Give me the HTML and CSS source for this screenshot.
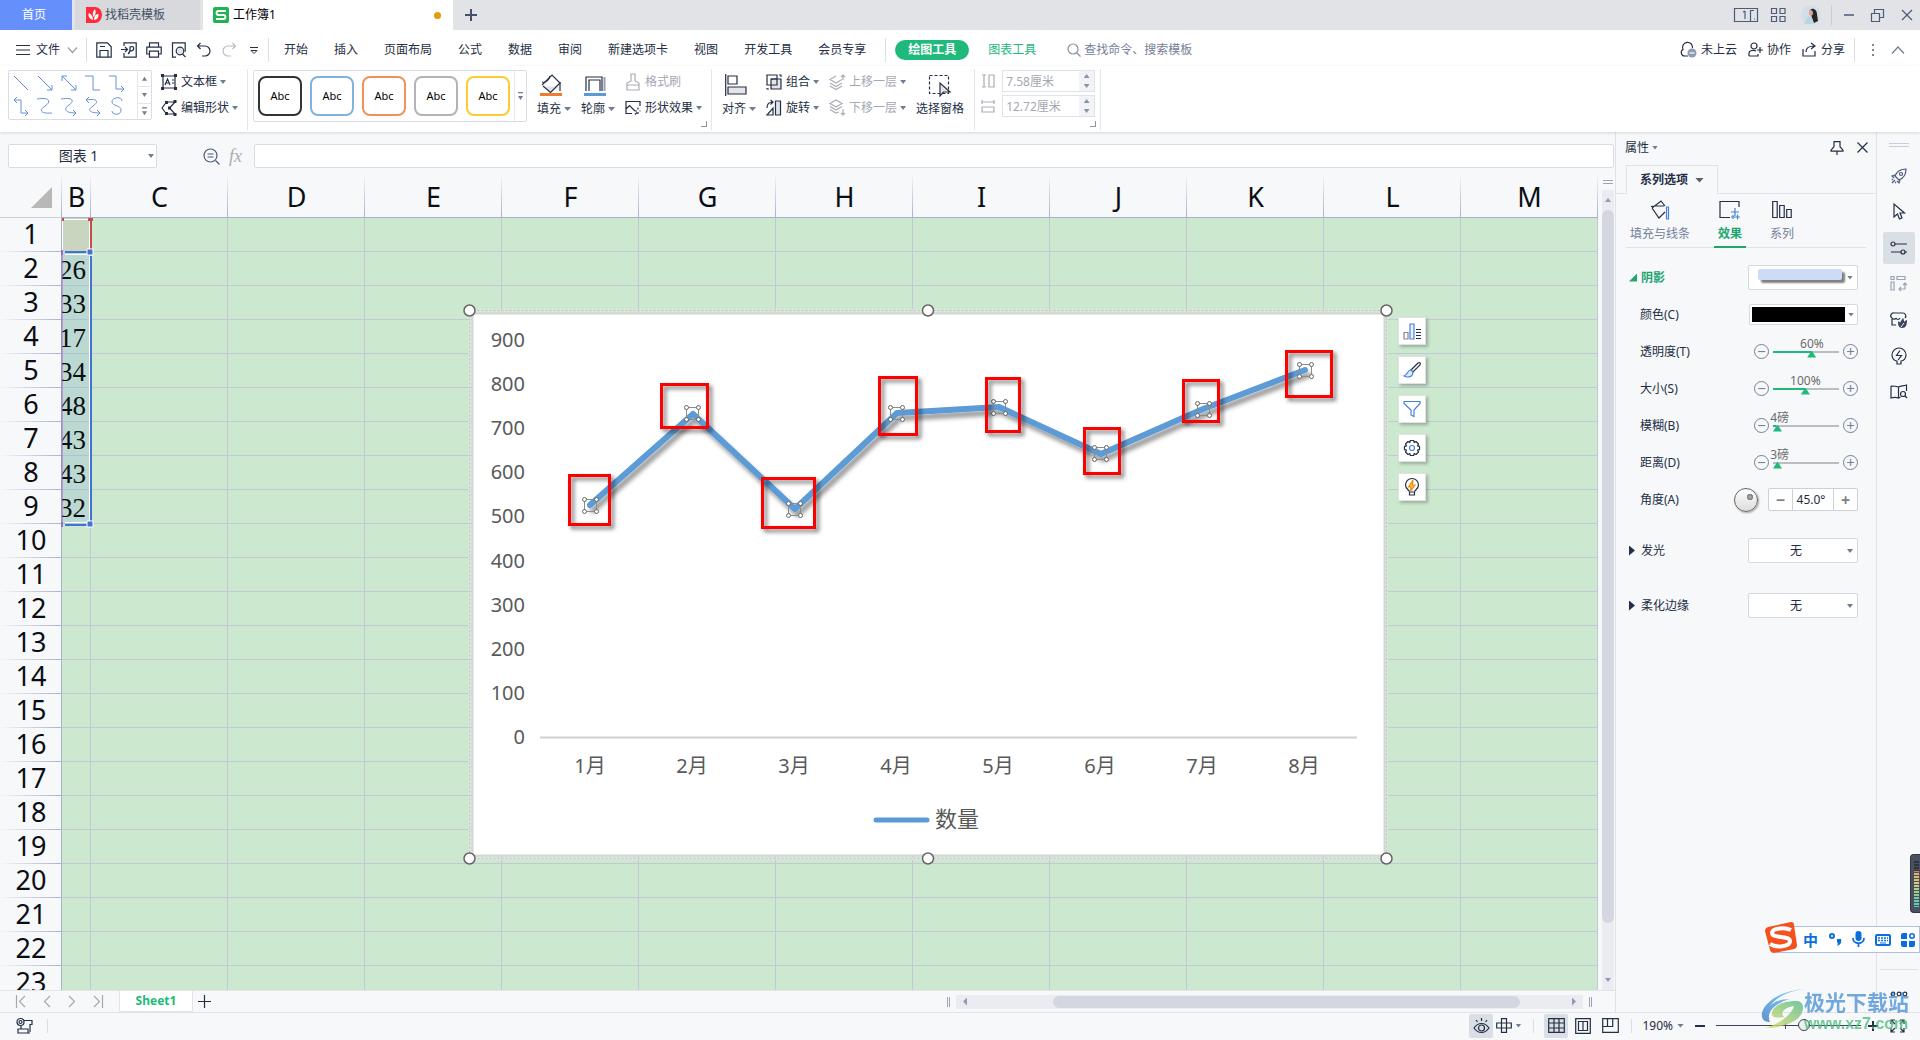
FILE: index.html
```html
<!DOCTYPE html>
<html lang="zh-CN">
<head>
<meta charset="utf-8">
<title>工作簿1</title>
<link rel="stylesheet" href="styles.css">
</head>
<body>
<header class="titlebar">
  <button class="tab tab-home">首页</button>
  <button class="tab tab-store">
    <svg width="16" height="16" viewBox="0 0 16 16"><path d="M0 0h9a7 8 0 0 1 0 16H0z" fill="#ff2b3c"/><path d="M7 13C2 11 2 8 3 6c2 1 4 3 4 7zM7.500 10C6 7 7 4 9 2c1 3 1 6-1.500 8zM8 13c0-4 2-6 4.500-6C13 10 11 13 8 13z" fill="#fff"/></svg>
    找稻壳模板</button>
  <button class="tab tab-active">
    <svg width="16" height="16" viewBox="0 0 16 16"><rect width="16" height="16" rx="2" fill="#1eb450"/><path d="M13 4H5.500C3 4 3 8 5.500 8h5C13 8 13 12 10.500 12H3" fill="none" stroke="#fff" stroke-width="2"/></svg>
    工作簿1<i class="unsaved"></i></button>
  <button class="icon-btn new-tab" aria-label="新建"><svg class="ln" width="12" height="12"><path d="M6 0v12M0 6h12" stroke="#45506a" stroke-width="2"/></svg></button>
  <div class="window-tools">
    <button class="icon-btn" aria-label="窗口"><svg class="ln slate" width="24" height="14"><path d="M.5.5h23v13H.5zM11 3v8M9 4l2-1M20 2.500h-3.500v11M20 11h1"/></svg></button>
    <button class="icon-btn apps" aria-label="应用"><svg class="ln slate" width="15" height="14"><path d="M.5.5h5v5h-5zM9 .5h5v5H9zM.5 8.500h5v5h-5zM9 8.500h5v5H9z"/></svg></button>
    <svg class="avatar" width="20" height="20" viewBox="0 0 20 20"><circle cx="10" cy="10" r="10" fill="#d3dfe6"/><path d="M9 5c3-3 7 0 7 4l1 7-4 2-2-5z" fill="#2b2226"/><path d="M8 5c2-1 4 1 4 3 0 3-2 3-4 2z" fill="#d9a596"/><path d="M3 19l4-8 4 2 2 6z" fill="#b9d7e2"/></svg>
    <i class="sep"></i>
    <button class="icon-btn min" aria-label="最小化"><svg class="ln slate" width="12" height="12"><path d="M1 6h10" stroke-width="1.500"/></svg></button>
    <button class="icon-btn restore" aria-label="还原"><svg class="ln slate" width="13" height="13"><path d="M.5 4.500h8v8h-8zM3.500 4V.5h9v8H9"/></svg></button>
    <button class="icon-btn" aria-label="关闭"><svg class="ln slate" width="12" height="12"><path d="M1 1l10 10M11 1L1 11"/></svg></button>
  </div>
</header>

<nav class="menubar">
  <button class="file-menu"><svg class="ln" width="14" height="12"><path d="M0 1.500h14M0 6h14M0 10.500h14"/></svg>文件
    <svg class="ln chev" width="9" height="6"><path d="M0 .5l4.500 5 4.500-5"/></svg></button>
  <i class="vr"></i>
  <div class="quick">
    <button class="icon-btn" aria-label="保存"><svg class="ln" width="16" height="16"><path d="M.8.8h10.700l3.700 4v10.400H.8zM4 4.500h5M4 15V8.500h8V15" /></svg></button>
    <button class="icon-btn" aria-label="输出为PDF"><svg class="ln" width="16" height="16"><path d="M3 4V.8h12.200v14.400H3V11M0 7.500h6M4 5l2.500 2.500L4 10M7 12c3-2 2-5 2-7 5-2 5 4 0 4"/></svg></button>
    <button class="icon-btn" aria-label="打印"><svg class="ln" width="16" height="16"><path d="M3.500 5V.8h9V5M3.500 12H.8V5.200h14.400V12h-2.700M3.500 9.200h9v6h-9z"/></svg></button>
    <button class="icon-btn" aria-label="打印预览"><svg class="ln" width="16" height="16"><path d="M5 15.200H1.500V.8h12.700v9"/><circle cx="9" cy="9" r="3.800" fill="#e3e5e8"/><path d="M11.500 12l3 3.200"/></svg></button>
    <button class="icon-btn" aria-label="撤销"><svg class="ln" width="16" height="16"><path d="M4.500 1L1.500 4l3 3M1.500 4h7.500a5 5 0 0 1 0 10H6"/></svg></button>
    <button class="icon-btn" aria-label="恢复"><svg class="ln pale" width="16" height="16"><path d="M11.500 1l3 3-3 3M14.500 4H7a5 5 0 0 0 0 10h3"/></svg></button>
    <button class="icon-btn" aria-label="更多"><svg class="ln" width="16" height="16"><path d="M4 5.500h8M5 8.500h6l-3 3z" stroke-width="1"/></svg></button>
  </div>
  <i class="vr"></i>
  <div class="menus">
    <button>开始</button><button>插入</button><button>页面布局</button><button>公式</button><button>数据</button><button>审阅</button><button>新建选项卡</button><button>视图</button><button>开发工具</button><button>会员专享</button>
  </div>
  <i class="vr"></i>
  <button class="pill">绘图工具</button>
  <button class="green-tab">图表工具</button>
  <label class="search"><svg class="ln" width="14" height="14"><circle cx="6" cy="6" r="5"/><path d="M9.500 9.500l4 4"/></svg><input type="text" placeholder="查找命令、搜索模板"></label>
  <div class="account">
    <button><svg class="ln" width="17" height="16"><path d="M8 14H4.500A3.500 3.500 0 0 1 3 7.500 5 5 0 1 1 12.500 6"/><circle cx="12" cy="11" r="4.500" fill="#8f9ab3" stroke="none"/><path d="M9.500 11h5" stroke="#fff"/></svg>未上云</button>
    <button><svg class="ln" width="15" height="15"><circle cx="6" cy="4" r="3"/><path d="M1 14v-3c0-3 5-3 7-2M1 14h9v-2M12 5v6M9 8h6"/></svg>协作</button>
    <button><svg class="ln" width="15" height="15"><path d="M1 7v7h12V9M4 10c0-4 3-6 8-6M9 1l4 3-4 3"/></svg>分享</button>
    <i class="vr"></i>
    <button class="icon-btn" aria-label="更多"><svg width="4" height="14"><path d="M1 1h2v2H1zM1 6h2v2H1zM1 11h2v2H1z" fill="#7c8599"/></svg></button>
    <button class="icon-btn" aria-label="收起"><svg class="ln" width="14" height="8"><path d="M1 7.500L7 1l6 6.500" stroke="#707a90"/></svg></button>
  </div>
</nav>

<section class="ribbon">
  <div class="group g-shapes">
    <div class="shape-gallery">
      <div class="shapes">
        <button aria-label="直线"><svg width="24" height="24"><path d="M5 5l14 14"/></svg></button>
        <button aria-label="箭头"><svg width="24" height="24"><path d="M5 5l14 14M19 14v5h-5"/></svg></button>
        <button aria-label="双箭头"><svg width="24" height="24"><path d="M5 5l14 14M19 14v5h-5M5 10V5h5"/></svg></button>
        <button aria-label="肘形"><svg width="24" height="24"><path d="M4 5h8v14h7"/></svg></button>
        <button aria-label="肘形箭头"><svg width="24" height="24"><path d="M4 5h7v13h8M16 15l3 3-3 3"/></svg></button>
        <button aria-label="肘形双箭头"><svg width="24" height="24"><path d="M5 5h7v13h7M16 15l3 3-3 3M8 2L5 5l3 3"/></svg></button>
        <button aria-label="曲线"><svg width="24" height="24"><path d="M4 4c14-2 14 3 8 7s-5 8 7 7"/></svg></button>
        <button aria-label="曲线箭头"><svg width="24" height="24"><path d="M4 4c12-2 14 2 8 6s-4 8 7 8M16 15l3 3-3 3"/></svg></button>
        <button aria-label="曲线双箭头"><svg width="24" height="24"><path d="M5 5c12-2 13 2 7 6s-4 7 7 7M16 15l3 3-3 3M8 2L5 5l3 3"/></svg></button>
        <button aria-label="自由曲线"><svg width="24" height="24"><path d="M17 6c0-5-10-4-10 1 0 4 9 3 9 8 0 6-9 5-9 1"/></svg></button>
      </div>
      <div class="gallery-nav"><button aria-label="上"><i class="caret up"></i></button><button aria-label="下"><i class="caret"></i></button><button aria-label="展开"><i class="caret bar"></i></button></div>
    </div>
    <div class="pair">
      <button class="cmd"><svg class="ln" width="16" height="16"><path d="M2 2h12v12H2z"/><path d="M0 0h3v3H0zM13 0h3v3h-3zM0 13h3v3H0zM13 13h3v3h-3z" fill="#242e44" stroke="none"/><path d="M4 11l2.500-6L9 11M5 9h3M11 6h2M11 9h2"/></svg>文本框<i class="caret"></i></button>
      <button class="cmd"><svg class="ln" width="16" height="16"><path d="M5.500 2H14L8.500 8l5.500 6H5.500L1 8z"/><path d="M4 1h3v3H4zM12.500 0h3v3h-3zM12.500 13h3v3h-3zM4 12h3v3H4zM7 6.500h3v3H7z" fill="#242e44" stroke="none"/></svg>编辑形状<i class="caret"></i></button>
    </div>
  </div>
  <div class="group g-style">
    <div class="style-gallery">
      <button class="swatch s-black">Abc</button><button class="swatch s-blue">Abc</button><button class="swatch s-orange">Abc</button><button class="swatch s-gray">Abc</button><button class="swatch s-gold">Abc</button>
      <button class="more" aria-label="展开"><i class="caret bar"></i></button>
    </div>
    <button class="big"><svg class="ln" width="22" height="22" viewBox="0 0 22 22"><path d="M5 12.500h14L10.500 19z" fill="#dfe2e6" stroke="none"/><path d="M2 11L12 1l8 8-9.500 9.500L3 12"/><path d="M2 8c4 1 7-2 8-6M20 8v9"/><path d="M0 20.500h22" stroke="#ed7d31" stroke-width="3"/></svg><span>填充<i class="caret"></i></span></button>
    <button class="big"><svg class="ln" width="22" height="22" viewBox="0 0 22 22"><path d="M2 17V3h16v14"/><path d="M5 17V6h11v11" /><path d="M20.500 3v14" stroke="#9aa0ac" stroke-width="2"/><path d="M0 20.500h22" stroke="#5b9bd5" stroke-width="3"/></svg><span>轮廓<i class="caret"></i></span></button>
    <div class="pair">
      <button class="cmd off"><svg class="ln" width="16" height="18"><path d="M6 8V1h4v7l4 2v7H2v-7zM2 12h12"/></svg>格式刷</button>
      <button class="cmd"><svg class="ln" width="16" height="16"><path d="M15 6V1.500H1v12h6M1 9l3.500-3.500L10 11M13 7.500v2M13 12v2M10 11h2M14.500 11h1M10 14.500l2-2"/></svg>形状效果<i class="caret"></i></button>
    </div>
    <i class="corner"></i>
  </div>
  <div class="group g-arrange">
    <button class="big"><svg class="ln" width="22" height="22"><path d="M.7 0v22M3 2h9v8H3z"/><path d="M3 13h18v7H3z" fill="#e3e5e8"/></svg><span>对齐<i class="caret"></i></span></button>
    <div class="pair">
      <button class="cmd"><svg class="ln" width="16" height="16"><path d="M5 5h10v10H5z" fill="#e3e5e8"/><path d="M1 1h10v10H1zM5 5h6v6M1 14v1h2M13 1h2v2"/></svg>组合<i class="caret"></i></button>
      <button class="cmd"><svg class="ln" width="16" height="16"><path d="M9.500 1h5v14h-5z" fill="#e3e5e8"/><path d="M7 15H1l6-7zM1 8c0-4 2-6 6-6M4.500 0L7 2 4.500 4.500"/></svg>旋转<i class="caret"></i></button>
    </div>
    <div class="pair">
      <button class="cmd off"><svg class="ln" width="16" height="16"><path d="M7 2L1 5.500 7 9l6-3.500M1 9l6 3.500L13 9M1 12l6 3.500 6-3.500M14 6V1M12 3l2-2 2 2"/></svg>上移一层<i class="caret"></i></button>
      <button class="cmd off"><svg class="ln" width="16" height="16"><path d="M7 0L1 3.500 7 7l6-3.500zM1 6.500L7 10l6-3.500M1 9.500L7 13l3-1M14 9v6M12 13l2 2 2-2"/></svg>下移一层<i class="caret"></i></button>
    </div>
    <button class="big pane"><svg class="ln" width="24" height="22"><path d="M1.500 1.500h19v18h-19z" stroke-dasharray="3 2"/><path d="M12 9v13l3.500-4H22z" fill="#e3e5e8"/></svg><span>选择窗格</span></button>
  </div>
  <div class="group g-size">
    <div class="pair">
      <label class="dim"><svg class="ln" width="14" height="14"><path d="M1 1h4M1 13h4M3 1v12M8 1h5v12H8z"/></svg><input type="text" value="7.58厘米" aria-label="高度" disabled><span class="steps"><i class="caret up"></i><i class="caret"></i></span></label>
      <label class="dim"><svg class="ln" width="14" height="14"><path d="M1 1v4M13 1v4M1 3h12M1 8h12v5H1z"/></svg><input type="text" value="12.72厘米" aria-label="宽度" disabled><span class="steps"><i class="caret up"></i><i class="caret"></i></span></label>
    </div>
    <i class="corner"></i>
  </div>
</section>

<main class="workspace">
  <section class="book">
    <div class="formula-bar">
      <div class="name-box"><input type="text" value="图表 1" aria-label="名称框"><i class="caret"></i></div>
      <button class="icon-btn lens" aria-label="浏览公式"><svg class="ln slate" width="17" height="17"><circle cx="7.500" cy="7.500" r="6.500"/><path d="M12.500 12.500l4 4M4.500 6h6M4.500 9h6"/></svg></button>
      <span class="fx">fx</span>
      <input class="formula" type="text" aria-label="编辑栏">
    </div>
    <div class="sheet-area">
      <div class="sheet">
        <table class="cells">
          <colgroup><col class="c-head"><col class="c-b"><col span="11" class="c-std"></colgroup>
          <thead><tr><th class="all"><i></i></th><th>B</th><th>C</th><th>D</th><th>E</th><th>F</th><th>G</th><th>H</th><th>I</th><th>J</th><th>K</th><th>L</th><th>M</th></tr></thead>
          <tbody>
            <tr><th>1</th><td class="ref-name"></td><td></td><td></td><td></td><td></td><td></td><td></td><td></td><td></td><td></td><td></td><td></td></tr>
            <tr><th>2</th><td class="ref-val"><div>26</div></td><td></td><td></td><td></td><td></td><td></td><td></td><td></td><td></td><td></td><td></td><td></td></tr>
            <tr><th>3</th><td class="ref-val"><div>33</div></td><td></td><td></td><td></td><td></td><td></td><td></td><td></td><td></td><td></td><td></td><td></td></tr>
            <tr><th>4</th><td class="ref-val"><div>17</div></td><td></td><td></td><td></td><td></td><td></td><td></td><td></td><td></td><td></td><td></td><td></td></tr>
            <tr><th>5</th><td class="ref-val"><div>34</div></td><td></td><td></td><td></td><td></td><td></td><td></td><td></td><td></td><td></td><td></td><td></td></tr>
            <tr><th>6</th><td class="ref-val"><div>48</div></td><td></td><td></td><td></td><td></td><td></td><td></td><td></td><td></td><td></td><td></td><td></td></tr>
            <tr><th>7</th><td class="ref-val"><div>43</div></td><td></td><td></td><td></td><td></td><td></td><td></td><td></td><td></td><td></td><td></td><td></td></tr>
            <tr><th>8</th><td class="ref-val"><div>43</div></td><td></td><td></td><td></td><td></td><td></td><td></td><td></td><td></td><td></td><td></td><td></td></tr>
            <tr><th>9</th><td class="ref-val"><div>32</div></td><td></td><td></td><td></td><td></td><td></td><td></td><td></td><td></td><td></td><td></td><td></td></tr>
            <tr><th>10</th><td></td><td></td><td></td><td></td><td></td><td></td><td></td><td></td><td></td><td></td><td></td><td></td></tr>
            <tr><th>11</th><td></td><td></td><td></td><td></td><td></td><td></td><td></td><td></td><td></td><td></td><td></td><td></td></tr>
            <tr><th>12</th><td></td><td></td><td></td><td></td><td></td><td></td><td></td><td></td><td></td><td></td><td></td><td></td></tr>
            <tr><th>13</th><td></td><td></td><td></td><td></td><td></td><td></td><td></td><td></td><td></td><td></td><td></td><td></td></tr>
            <tr><th>14</th><td></td><td></td><td></td><td></td><td></td><td></td><td></td><td></td><td></td><td></td><td></td><td></td></tr>
            <tr><th>15</th><td></td><td></td><td></td><td></td><td></td><td></td><td></td><td></td><td></td><td></td><td></td><td></td></tr>
            <tr><th>16</th><td></td><td></td><td></td><td></td><td></td><td></td><td></td><td></td><td></td><td></td><td></td><td></td></tr>
            <tr><th>17</th><td></td><td></td><td></td><td></td><td></td><td></td><td></td><td></td><td></td><td></td><td></td><td></td></tr>
            <tr><th>18</th><td></td><td></td><td></td><td></td><td></td><td></td><td></td><td></td><td></td><td></td><td></td><td></td></tr>
            <tr><th>19</th><td></td><td></td><td></td><td></td><td></td><td></td><td></td><td></td><td></td><td></td><td></td><td></td></tr>
            <tr><th>20</th><td></td><td></td><td></td><td></td><td></td><td></td><td></td><td></td><td></td><td></td><td></td><td></td></tr>
            <tr><th>21</th><td></td><td></td><td></td><td></td><td></td><td></td><td></td><td></td><td></td><td></td><td></td><td></td></tr>
            <tr><th>22</th><td></td><td></td><td></td><td></td><td></td><td></td><td></td><td></td><td></td><td></td><td></td><td></td></tr>
            <tr><th>23</th><td></td><td></td><td></td><td></td><td></td><td></td><td></td><td></td><td></td><td></td><td></td><td></td></tr>
          </tbody>
        </table>
        <!-- source ranges of the series -->
        <svg class="ranges" width="34" height="314" viewBox="0 0 34 314">
          <path d="M1.500 1v32M1 1.500h27" stroke="#fff"/><path d="M28.500 3v30" stroke="#fff"/><path d="M30 2v32" stroke="#c84c4c" stroke-width="2"/><path d="M1 0h2v3H1zM27 0h5v3h-5z" fill="#c84c4c"/>
          <path d="M4 36.500h23M28.500 39v266M4 304.500h23" stroke="#fff"/>
          <path d="M4 34h25M30 38v268M4 307h24" stroke="#4472d4" stroke-width="2"/><path d="M1 34v273" stroke="#9a6bc8" stroke-width="1"/>
          <path d="M26 31h6v6h-6zM26 303h6v6h-6z" fill="#4472d4" stroke="#fff"/><path d="M0 32h2v5H0zM0 304h2v5H0z" fill="#9a6bc8"/>
        </svg>
        <svg class="chart" width="936" height="570" viewBox="460 300 936 570">
          <defs>
            <filter id="lineShadow" x="-10%" y="-30%" width="120%" height="170%"><feDropShadow dx="3" dy="5" stdDeviation="2" flood-color="#000" flood-opacity=".4"/></filter>
            <filter id="boxShadow" x="-30%" y="-30%" width="170%" height="170%"><feDropShadow dx="3" dy="3" stdDeviation="2" flood-color="#000" flood-opacity=".55"/></filter>
            <g id="mark"><path d="M-6-6H6V6H-6z" fill="none" stroke="#8c8c8c"/><g fill="#fff" stroke="#666"><circle cx="-6" cy="-6" r="2"/><circle cx="6" cy="-6" r="2"/><circle cx="-6" cy="6" r="2"/><circle cx="6" cy="6" r="2"/></g></g>
          </defs>
          <rect x="469.500" y="310.500" width="917" height="548" fill="none" stroke="#e3e6e4" stroke-width="2"/>
          <rect x="469.500" y="310.500" width="917" height="548" fill="none" stroke="#b9c4bd" stroke-dasharray="2 2"/>
          <rect x="472.500" y="313.500" width="912" height="542" fill="#fff" stroke="#d4d6d5" stroke-width="2"/>
          <g class="axis" text-anchor="end"><text x="525" y="347">900</text><text x="525" y="391">800</text><text x="525" y="435">700</text><text x="525" y="479">600</text><text x="525" y="523">500</text><text x="525" y="568">400</text><text x="525" y="612">300</text><text x="525" y="656">200</text><text x="525" y="700">100</text><text x="525" y="744">0</text></g>
          <path d="M540 737.500h817" stroke="#d0d0d0" stroke-width="2"/>
          <g class="axis" text-anchor="middle"><text x="590" y="773">1月</text><text x="692" y="773">2月</text><text x="794" y="773">3月</text><text x="896" y="773">4月</text><text x="998" y="773">5月</text><text x="1100" y="773">6月</text><text x="1202" y="773">7月</text><text x="1304" y="773">8月</text></g>
          <polyline points="590,505 693,414 795,509 897,413 999,407 1101,454 1203,409 1305,370" fill="none" stroke="#5b9bd5" stroke-width="6" stroke-linecap="round" stroke-linejoin="round" filter="url(#lineShadow)"/>
          <use href="#mark" x="590.500" y="505.500"/><use href="#mark" x="692.500" y="413.500"/><use href="#mark" x="794.500" y="509.500"/><use href="#mark" x="896.500" y="413.500"/><use href="#mark" x="999.500" y="407.500"/><use href="#mark" x="1100.500" y="453.500"/><use href="#mark" x="1203.500" y="409.500"/><use href="#mark" x="1305.500" y="370.500"/>
          <path d="M876 820h51" stroke="#5b9bd5" stroke-width="5" stroke-linecap="round"/><text class="legend" x="935" y="827">数量</text>
          <g fill="none" stroke="#f00" stroke-width="3">
            <rect x="569.500" y="475.500" width="40" height="49" filter="url(#boxShadow)"/><rect x="661.500" y="384.500" width="46" height="43" filter="url(#boxShadow)"/><rect x="762.500" y="478.500" width="52" height="49" filter="url(#boxShadow)"/><rect x="879.500" y="377.500" width="37" height="57" filter="url(#boxShadow)"/><rect x="986.500" y="378.500" width="33" height="53" filter="url(#boxShadow)"/><rect x="1084.500" y="428.500" width="35" height="45" filter="url(#boxShadow)"/><rect x="1183.500" y="380.500" width="35" height="41" filter="url(#boxShadow)"/><rect x="1286.500" y="351.500" width="45" height="45" filter="url(#boxShadow)"/>
          </g>
          <g fill="#fff" stroke="#666" stroke-width="1.500"><circle cx="469.500" cy="310.500" r="5.500"/><circle cx="928" cy="310.500" r="5.500"/><circle cx="1386.500" cy="310.500" r="5.500"/><circle cx="469.500" cy="858.500" r="5.500"/><circle cx="928" cy="858.500" r="5.500"/><circle cx="1386.500" cy="858.500" r="5.500"/></g>
        </svg>
        <div class="chart-tools">
          <button aria-label="图表元素"><svg class="ln" width="18" height="18"><path d="M1 10.500h4V17H1z" stroke="#888"/><path d="M7 2h4v15H7z" stroke="#4a80dc" fill="#eaf1fd"/><path d="M13 7.500h5M13 10.500h5M13 13.500h5M13 16.500h5"/></svg></button>
          <button aria-label="图表样式"><svg class="ln" width="18" height="18"><path d="M8 9l7-7c2-1 3 0 2 2l-7 7z"/><path d="M8 9c-4 0-3 5-7 6 4 2 9 1 9-4z" stroke="#4a80dc" fill="#dbe8fc"/></svg></button>
          <button aria-label="图表筛选器"><svg class="ln" width="18" height="18"><path d="M1 1.500h16v2L11 10v6.500L8 15v-5L1 3.500z" stroke="#4a80dc"/></svg></button>
          <button aria-label="设置"><svg class="ln" width="18" height="18" viewBox="0 0 18 18"><path d="M7.300 1.500h3.400l.5 2 1.800-1 2.500 2.500-1 1.800 2 .5v3.400l-2 .5 1 1.800-2.500 2.500-1.800-1-.5 2H7.300l-.5-2-1.800 1L2.500 13l1-1.800-2-.5V7.300l2-.5-1-1.800L5 2.500l1.800 1z" stroke-linejoin="round"/><circle cx="9" cy="9" r="2.500" stroke="#4a80dc"/></svg></button>
          <button aria-label="智能"><svg class="ln" width="18" height="18"><path d="M6.500 14c0-2-4-3-4-7a6.500 6.500 0 0 1 13 0c0 4-4 5-4 7zM6.500 17h5V14h-5z"/><path d="M10 2L5.500 9H8l-.5 4L12 7H9.500z" fill="#ffc629" stroke="#e88b1a"/></svg></button>
        </div>
      </div>
      <div class="vscroll"><i class="split-h"></i><div class="vtrack"><i class="caret up"></i><i class="vthumb"></i><i class="caret"></i></div></div>
    </div>
    <div class="sheet-tabs">
      <div class="sheet-nav">
        <button class="icon-btn" aria-label="第一张"><svg class="ln" width="10" height="13"><path d="M.5 0v13M9 1L3.500 6.500 9 12"/></svg></button>
        <button class="icon-btn" aria-label="上一张"><svg class="ln" width="8" height="13"><path d="M7 1L1.500 6.500 7 12"/></svg></button>
        <button class="icon-btn" aria-label="下一张"><svg class="ln" width="8" height="13"><path d="M1 1l5.500 5.500L1 12"/></svg></button>
        <button class="icon-btn" aria-label="最后一张"><svg class="ln" width="10" height="13"><path d="M9.500 0v13M1 1l5.500 5.500L1 12"/></svg></button>
      </div>
      <button class="sheet-tab">Sheet1</button>
      <button class="icon-btn add" aria-label="新建工作表"><svg class="ln" width="13" height="13"><path d="M6.500 0v13M0 6.500h13"/></svg></button>
      <div class="hscroll"><i class="split-v"></i><div class="htrack"><i class="caret left"></i><i class="hthumb"></i><i class="caret right"></i></div><i class="split-v"></i></div>
    </div>
  </section>

  <aside class="panel">
    <div class="panel-title"><button class="plain">属性<i class="caret"></i></button>
      <button class="icon-btn pin" aria-label="固定"><svg class="ln" width="14" height="14"><path d="M4 .7h6v5l3 3.500v1H1v-1l3-3.500zM7 10v4"/></svg></button>
      <button class="icon-btn" aria-label="关闭"><svg class="ln" width="11" height="11"><path d="M.5.5l10 10M10.500.5l-10 10"/></svg></button></div>
    <div class="panel-tabs"><button>系列选项<i class="caret"></i></button></div>
    <div class="sub-tabs">
      <button><svg class="ln" width="20" height="20"><path d="M1 6.500l4-.5h9M2 8l9-7 4 5M2 8l7 10 6-6"/><path d="M16.500 7h2v12h-2z" stroke="#4a80dc"/></svg>填充与线条</button>
      <button class="on"><svg class="ln" width="22" height="20"><path d="M11 17.500H1v-16h19V7"/><path d="M16 8v8M12 12h8M18.500 14.500v5M16 17h5M14 15v4M12 17h4" stroke="#4a80dc"/></svg>效果</button>
      <button><svg class="ln" width="20" height="20"><path d="M.7 1.500h4.500v16H.7zM7.700 5.500h4.500v12H7.700zM14.700 9.500h4.500v8h-4.500z"/></svg>系列</button>
    </div>
    <form class="props">
      <div class="row head on"><i class="tri-open"></i><span class="grow">阴影</span><button type="button" class="combo"><i class="shadow-sample"></i><i class="caret"></i></button></div>
      <div class="row"><span class="grow">颜色(C)</span><button type="button" class="combo color"><i class="ink"></i><i class="caret"></i></button></div>
      <div class="row"><label class="grow" for="alpha">透明度(T)</label><div class="slide"><button type="button" class="rnd">−</button><div class="track"><output style="left:59%">60%</output><input id="alpha" type="range" min="0" max="100" value="60" style="--fill:59%"></div><button type="button" class="rnd">+</button></div></div>
      <div class="row"><label class="grow" for="size">大小(S)</label><div class="slide"><button type="button" class="rnd">−</button><div class="track"><output style="left:49%">100%</output><input id="size" type="range" min="0" max="200" value="98" style="--fill:49%"></div><button type="button" class="rnd">+</button></div></div>
      <div class="row"><label class="grow" for="blur">模糊(B)</label><div class="slide"><button type="button" class="rnd">−</button><div class="track"><output style="left:10%">4磅</output><input id="blur" type="range" min="0" max="100" value="0" style="--fill:4%"></div><button type="button" class="rnd">+</button></div></div>
      <div class="row"><label class="grow" for="dist">距离(D)</label><div class="slide"><button type="button" class="rnd">−</button><div class="track"><output style="left:10%">3磅</output><input id="dist" type="range" min="0" max="200" value="0" style="--fill:0%"></div><button type="button" class="rnd">+</button></div></div>
      <div class="row"><label class="grow" for="angle">角度(A)</label><i class="knob"></i><div class="spin"><button type="button">−</button><input id="angle" type="text" value="45.0°"><button type="button">+</button></div></div>
      <div class="row head tall"><i class="tri-shut"></i><label class="grow" for="glow">发光</label><div class="pick"><select id="glow"><option>无</option></select><i class="caret"></i></div></div>
      <div class="row head tall"><i class="tri-shut"></i><label class="grow" for="soft">柔化边缘</label><div class="pick"><select id="soft"><option>无</option></select><i class="caret"></i></div></div>
    </form>
  </aside>

  <nav class="rail">
    <i class="grip"></i>
    <button aria-label="快速"><svg class="ln slate" width="18" height="18"><path d="M5 9c2-5 5-7 11-7 0 6-2 9-7 11zM5 8L2 9l2 2M10 13l-1 3-2-2M3 12l-1 1M5 13l-3 3M6 15l-1 1"/><circle cx="11" cy="7" r="1.500"/></svg></button>
    <button aria-label="选择"><svg class="ln" width="14" height="18"><path d="M2 1v13l3.500-3 2 5 2.500-1-2-5h4.500z"/></svg></button>
    <button class="on" aria-label="属性"><svg class="ln" width="18" height="16"><circle cx="3" cy="4" r="2"/><path d="M5 4h12M1 12h10M15 12h2"/><circle cx="13" cy="12" r="2"/></svg></button>
    <button aria-label="分析"><svg class="ln faint" width="18" height="18"><path d="M1 1.500h3v3H1zM7 1.500h8v3H7zM1 7h3v8H1zM9 14h6V8M13 10l2-2 2 2M11 12l-2 2 2 2"/></svg></button>
    <button aria-label="素材"><svg class="ln" width="18" height="18"><path d="M6 14H2V8M2 7C-1 5 2 1 4 2h9c2 0 4 3 2 5M2 7c1 2 4 1 4 0 1 2 3 2 4 0"/><path d="M8 11c1-1 2 0 2 1 1-2 2-4 3-5 1 1 1 3 1 4 1-1 2-2 3-2 0 5-1 8-5 8-3 0-4-3-4-6z" fill="#39435a" stroke="none"/><path d="M11 16l3-4" stroke="#f6f8fa" stroke-width="1"/></svg></button>
    <button aria-label="灵感"><svg class="ln" width="16" height="18"><path d="M6 17v-3C3 14 1 11 1 8a7 7 0 0 1 14 0c0 3-2 6-5 6v3z"/><path d="M9 3.500L5.500 8.500h5L7 13"/></svg></button>
    <button aria-label="帮助"><svg class="ln" width="18" height="18"><path d="M1 3c3 0 5 0 7.500 1C11 3 13 3 16.500 2v6M8.500 4v11C6 14 4 14 1 15V3M8.500 15l2-1"/><circle cx="13" cy="11" r="2.500"/><path d="M15 13l2 2"/></svg></button>
    <button class="dots" aria-label="更多"><svg class="ln" width="18" height="6"><circle cx="3" cy="3" r="1.800"/><circle cx="9" cy="3" r="1.800"/><circle cx="15" cy="3" r="1.800"/></svg></button>
  </nav>
</main>

<footer class="status">
  <svg class="ln macro" width="17" height="16"><circle cx="4.500" cy="4" r="3.500"/><circle cx="4.500" cy="4" r="1.500"/><path d="M8 2.500h8v4h-2V14M2 11h10v4H2zM5 8v3M8 15h6"/></svg>
  <i class="vr"></i>
  <div class="views">
    <button class="on" aria-label="护眼"><svg class="ln" width="17" height="16"><path d="M1 10c4-6 11-6 15 0-4 6-11 6-15 0zM8.500 0v3M3 2l1.500 2M14 2l-1.500 2"/><circle cx="8.500" cy="10" r="3"/></svg></button>
    <button class="read" aria-label="阅读"><svg class="ln" width="16" height="15"><path d="M5.500.7h5v13.600h-5zM.7 5h14.600v5H.7z"/></svg><i class="caret"></i></button>
    <i class="vr"></i>
    <button class="on" aria-label="普通"><svg class="ln" width="17" height="15"><path d="M.7.7h15.600v13.600H.7zM.7 5h16M.7 10h16M6 .7v14M11 .7v14"/></svg></button>
    <button aria-label="页面"><svg class="ln" width="16" height="16"><path d="M.7.7h14.600v14.600H.7zM3.500 3.500h9v9h-9zM8 3.500v9"/></svg></button>
    <button aria-label="分页"><svg class="ln" width="17" height="15"><path d="M.7.7h15.600v13.600H.7zM.7 8.500h10V.7M5.500.7v8"/></svg></button>
    <i class="vr"></i>
    <button class="zoom-val">190%<i class="caret"></i></button>
    <button class="minus" aria-label="缩小"><svg class="ln" width="10" height="10"><path d="M0 5h10" stroke-width="2"/></svg></button>
    <input class="zoom" type="range" min="0" max="100" value="62" aria-label="缩放">
    <button class="plus" aria-label="放大"><svg class="ln" width="10" height="10"><path d="M0 5h10M5 0v10" stroke-width="2"/></svg></button>
    <button class="full" aria-label="全屏"><svg class="ln" width="15" height="14"><path d="M1 5V1h4M10 1h4v4M14 9v4h-4M5 13H1V9M1 1l4 4M14 1l-4 4M14 13l-4-4M1 13l4-4"/></svg></button>
  </div>
</footer>

<!-- floating desktop overlays -->
<div class="meter"><i></i></div>
<div class="ime">
  <svg class="ime-logo" width="32" height="32" viewBox="0 0 32 32"><path d="M3 5l23-5q3 0 3 3l3 20q0 3-3 4L9 31q-3 0-4-3L0 9q0-3 3-4z" fill="#f4511e"/><path d="M26 8C20 5 7 6 7 11c0 6 18 2 18 8 0 6-14 7-20 3" fill="none" stroke="#fff" stroke-width="4"/></svg>
  <span>中</span>
  <svg width="13" height="15"><circle cx="3" cy="4" r="2" fill="none" stroke="#0a6fdc" stroke-width="2"/><path d="M8 7h4c1 4-1 6-4 7 1-2 1-3 0-4z" fill="#0a6fdc"/></svg>
  <svg width="13" height="17"><rect x="3.500" width="6" height="10" rx="3" fill="#0a6fdc"/><path d="M1 7c0 7 11 7 11 0M6.500 12v4" fill="none" stroke="#0a6fdc" stroke-width="1.800"/></svg>
  <svg width="16" height="12"><rect x="1" y="1" width="14" height="10" rx="1" fill="none" stroke="#0a6fdc" stroke-width="2"/><path d="M3 4h10M3 6.500h10" stroke="#0a6fdc" stroke-width="1.500" stroke-dasharray="2 1"/><path d="M5 9h6" stroke="#0a6fdc"/></svg>
  <svg width="14" height="14"><path d="M0 2q0-2 2-2h4v6H0zM0 8h6v6H2q-2 0-2-2zM8 8h6v4q0 2-2 2H8z" fill="#0a6fdc"/><circle cx="11" cy="3" r="2.200" fill="none" stroke="#0a6fdc" stroke-width="1.600"/></svg>
</div>
<div class="mark">
  <svg width="44" height="42" viewBox="0 0 44 42"><defs><linearGradient id="mb" x1="0" y1="1" x2="1" y2="0"><stop offset="0" stop-color="#3d7cc9"/><stop offset="1" stop-color="#6cc8f2"/></linearGradient><linearGradient id="mg" x1="0" y1="1" x2="1" y2="0"><stop offset="0" stop-color="#e6df63"/><stop offset="1" stop-color="#53b98b"/></linearGradient></defs><path d="M44 1C24 2 4 12 1 25c-1 8 4 9 8 9-4-9 3-18 20-23C20 11 12 14 9 18 15 9 28 3 44 1z" fill="url(#mb)"/><path d="M36 13C18 13 10 20 11 27c1 3 6 3 12 2-5-5 2-10 10-11-2 8-14 18-29 22 20 0 38-8 38-20 0-5-3-7-6-7z" fill="url(#mg)"/></svg>
  <div><b>极光下载站</b><em>www.xz7.com</em></div>
</div>
</body>
</html>
```
FILE: styles.css
```css
* { box-sizing: border-box; }
html, body { height: 100%; }
body {
  margin: 0; display: flex; flex-direction: column; position: relative; overflow: hidden;
  font: 12px/18px "Noto Sans", "Noto Sans CJK SC", sans-serif; color: #242e44; background: #f6f8fa;
}
button, input, select { font: inherit; color: inherit; border: 0; background: none; padding: 0; margin: 0; outline: 0; }
button { display: flex; align-items: center; white-space: nowrap; }
i, em { font-style: normal; }
svg { display: block; flex: none; }
.ln { fill: none; stroke: #242e44; stroke-width: 1.2; overflow: visible; }
.slate { stroke: #4d5a78; }
.pale { stroke: #b9bcc3; }
.faint { stroke: #9aa3b4; }
.icon-btn { justify-content: center; }
.vr { width: 1px; height: 24px; background: #dcdee2; flex: none; }
.caret { display: block; flex: none; width: 7px; height: 4px; background: #6f7c96; clip-path: polygon(0 0, 100% 0, 50% 100%); }
.caret.up { clip-path: polygon(50% 0, 100% 100%, 0 100%); }
.caret.left { width: 4px; height: 8px; clip-path: polygon(0 50%, 100% 0, 100% 100%); }
.caret.right { width: 4px; height: 8px; clip-path: polygon(0 0, 100% 50%, 0 100%); }
.caret.bar { height: 8px; clip-path: polygon(0 0, 100% 0, 100% 15%, 0 15%, 0 50%, 100% 50%, 50% 100%, 0 50%); }

/* title bar */
.titlebar { display: flex; height: 30px; background: #e1e3e7; flex: none; }
.tab { height: 30px; }
.tab-home { width: 72px; padding-left: 22px; background: #6590fb; color: #fff; }
.tab-store { width: 125px; margin: 0 3px; padding-left: 11px; gap: 3px; background: #d8d9dc; color: #454f66; }
.tab-active { width: 250px; padding: 0 12px 0 10px; gap: 4px; background: #fff; color: #000; }
.unsaved { width: 7px; height: 7px; border-radius: 50%; background: #e59a06; margin-left: auto; }
.new-tab { width: 36px; }
.window-tools { margin-left: auto; display: flex; align-items: center; padding-right: 7px; }
.apps { margin: 0 15px 0 13px; }
.window-tools .sep { width: 1px; height: 20px; background: #cbced4; margin: 0 11px 0 10px; }
.restore { margin: 0 17px 0 16px; }

/* menu */
.menubar { display: flex; align-items: center; height: 36px; flex: none; background: #fff; padding: 3px 15px 0 16px; }
.file-menu { gap: 6px; width: 61px; margin-right: 9px; }
.chev { stroke: #9a9fab; margin-left: 2px; }
.quick { display: flex; gap: 9px; padding: 0 6px 0 9px; }
.menus { display: flex; padding: 0 6px 0 2px; }
.menus button { padding: 0 13px; }
.pill { background: #20b97c; color: #fff; font-weight: 700; height: 20px; border-radius: 10px; padding: 0 13px; margin: 0 19px 0 9px; }
.green-tab { color: #20b97c; margin-right: 31px; }
.search { display: flex; align-items: center; gap: 3px; }
.search .ln { stroke: #8791a6; }
.search input { width: 130px; }
.search input::placeholder { color: #75809a; opacity: 1; }
.account { margin-left: auto; display: flex; align-items: center; gap: 9px; }
.account button { gap: 4px; }
.account button + button { margin-left: 2px; }
.account .icon-btn, .account .icon-btn + .icon-btn { margin-left: 7px; }

/* ribbon */
.ribbon { display: flex; height: 66px; flex: none; background: #fff; padding: 3px 0 2px; box-shadow: 0 1px 3px #00000022; position: relative; }
.group { display: flex; border-right: 1px solid #e4e6ea; position: relative; height: 61px; gap: 10px; }
.g-shapes { padding: 0 9px 0 8px; gap: 9px; }
.g-style { padding: 0 9px 0 5px; }
.g-arrange { padding: 0 10px; }
.g-size { padding: 0 5px 0 6px; }
.shape-gallery { display: flex; width: 144px; height: 50px; margin-top: 1px; border: 1px solid #d9dce1; border-radius: 2px; }
.shapes { display: grid; grid-template-columns: repeat(5, 24px); width: 128px; }
.shapes svg { fill: none; stroke: #6690d8; }
.gallery-nav { flex: 1; display: flex; flex-direction: column; border-left: 1px solid #e4e6ea; }
.gallery-nav button { flex: 1; justify-content: center; border-bottom: 1px solid #e4e6ea; }
.gallery-nav .caret { width: 5px; }
.gallery-nav button:last-child { border-bottom: 0; }
.pair { display: flex; flex-direction: column; gap: 6px; padding-top: 3px; }
.cmd { height: 20px; gap: 4px; }
.cmd .caret { width: 6px; margin-left: -1px; }
.off { color: #a4a8b1; }
.off .ln { stroke: #a9adb5; }
.style-gallery { display: flex; gap: 8px; width: 274px; height: 52px; margin-top: 1px; padding: 5px 0 5px 4px; border: 1px solid #d9dce1; border-radius: 2px; }
.swatch { width: 44px; height: 40px; flex: none; justify-content: center; border: 2px solid; border-radius: 8px; background: #fff; font-size: 11px; color: #000; }
.s-black { border-color: #333; } .s-blue { border-color: #7fb2de; } .s-orange { border-color: #f0935a; } .s-gray { border-color: #b4b4b4; } .s-gold { border-color: #ffcb30; }
.more { flex: 1; justify-content: center; border-left: 1px solid #e4e6ea; margin: -5px 0 -5px -4px; }
.more .caret { width: 5px; }
.big { flex-direction: column; padding-top: 5px; gap: 4px; }
.big span { display: flex; align-items: center; gap: 3px; }
.big svg { margin-right: 6px; }
.pane svg { margin-right: 0; }
.corner { position: absolute; right: 4px; bottom: 3px; width: 6px; height: 6px; border: solid #8d95a5; border-width: 0 1px 1px 0; }
.dim { display: flex; align-items: center; gap: 7px; height: 22px; }
.dim .ln { stroke: #a9adb5; }
.dim input { width: 84px; height: 22px; border: 1px solid #dfe2e8; border-right: 0; padding-left: 3px; color: #a4a8b1; background: #fff; }
.g-size .pair { padding-top: 1px; gap: 3px; }
.steps { width: 16px; height: 22px; margin-left: -14px; background: #f2f3f7; border: 1px solid #dfe2e8; border-left: 0; display: flex; flex-direction: column; align-items: center; justify-content: space-around; }
.steps .caret { width: 6px; background: #8d95a5; }

/* workspace */
.workspace { flex: 1; display: flex; min-height: 0; }
.book { flex: 1; display: flex; flex-direction: column; min-width: 0; }
.formula-bar { display: flex; align-items: center; height: 41px; flex: none; padding: 7px 1px 0 8px; }
.name-box { display: flex; align-items: center; width: 149px; height: 24px; padding-right: 2px; background: #fff; border: 1px solid #d9dce1; border-radius: 2px; }
.name-box input { flex: 1; min-width: 0; text-align: center; font-size: 14px; }
.name-box .caret { width: 6px; }
.lens { margin-left: 46px; }
.fx { width: 34px; padding-left: 9px; font: italic 18px/20px "Liberation Serif", serif; color: #a9adb5; }
.formula { flex: 1; min-width: 0; height: 24px; background: #fff; border: 1px solid #d9dce1; border-radius: 2px; }
.sheet-area { flex: 1; display: flex; min-height: 0; }
.sheet { flex: 1; min-width: 0; overflow: hidden; position: relative; background: #f6f8fa; }
.cells { table-layout: fixed; width: 1598px; border-collapse: separate; border-spacing: 0; font-size: 27px; line-height: 32px; color: #0b0d14; }
.c-head { width: 62px; } .c-b { width: 29px; } .c-std { width: 137px; }
.cells th { font-weight: 400; padding: 0; text-align: center; }
.cells thead th { height: 45px; padding-top: 4px; border-bottom: 1px solid #a9b0cc; background: linear-gradient(transparent, #a9b0cc) right / 1px 100% no-repeat; }
.cells thead .all { vertical-align: bottom; border-bottom-color: #ccd1df; }
.all i { display: block; width: 21px; height: 21px; margin: 0 0 9px 31px; background: #b8b8b8; clip-path: polygon(100% 0, 100% 100%, 0 100%); }
.cells tbody th { height: 34px; padding-bottom: 2px; background: linear-gradient(#a9b0cc, #a9b0cc) right / 1px 100% no-repeat, linear-gradient(90deg, transparent, #a9b0cc) bottom / 100% 1px no-repeat; }
.cells td { height: 34px; padding: 0; background: #cce8cf; border-right: 1px solid #c3c8d8; border-bottom: 1px solid #c3c8d8; }
.cells .ref-name { background: #c9d5bf; }
.cells .ref-val { background: #bbd9d1; border-bottom-color: #adc4d6; }
.ref-val div { display: flex; justify-content: flex-end; overflow: hidden; height: 33px; padding-right: 4px; font: 27px/36px "Liberation Serif", serif; }
.ranges { position: absolute; left: 61px; top: 45px; }
.chart { position: absolute; left: 460px; top: 127px; }
.axis { font: 20px "Noto Sans", "Noto Sans CJK SC", sans-serif; fill: #595959; }
.legend { font: 22px "Noto Sans CJK SC", sans-serif; fill: #595959; }
.chart-tools { position: absolute; left: 1398px; top: 144px; display: flex; flex-direction: column; gap: 11px; }
.chart-tools button { width: 28px; height: 28px; justify-content: center; background: #fff; border: 1px solid #dfe4e2; box-shadow: 2px 2px 3px #00000040; }
.vscroll { width: 12px; margin: 0 1px 0 4px; display: flex; flex-direction: column; }
.split-h { height: 4px; margin: 7px 1px 6px; border: solid #9aa3b8; border-width: 1px 0; }
.vtrack { flex: 1; display: flex; flex-direction: column; align-items: center; gap: 8px; padding: 8px 0; background: #ebecf2; }
.vtrack .caret { width: 6px; background: #8f9bb3; }
.vtrack .caret:last-child { margin-top: auto; }
.vthumb { width: 12px; height: 91%; border-radius: 6px; background: #d4d7df; }
.sheet-tabs { display: flex; align-items: center; height: 22px; flex: none; border-top: 1px solid #e2e4e8; }
.sheet-nav { display: flex; gap: 17px; padding: 0 17px 0 16px; width: 119px; justify-content: space-between; }
.sheet-nav .ln { stroke: #a5a8af; }
.sheet-tab { width: 74px; height: 21px; justify-content: center; background: #fff; color: #20b97c; font-weight: 700; border: solid #e2e4e8; border-width: 0 1px 1px; }
.add { margin-left: 5px; }
.hscroll { margin-left: auto; width: 645px; display: flex; gap: 6px; align-items: center; margin-right: 23px; }
.split-v { width: 3px; height: 10px; border: solid #9aa3b8; border-width: 0 1px; }
.htrack { flex: 1; height: 14px; padding: 0 7px; display: flex; align-items: center; background: #ebecf2; }
.htrack .caret { background: #8f9bb3; }
.hthumb { width: 467px; height: 12px; margin: 0 auto 0 86px; border-radius: 6px; background: #d4d7df; }

/* property panel */
.panel { width: 261px; border-left: 1px solid #dfe2e8; flex: none; }
.panel-title { display: flex; align-items: center; height: 33px; padding: 0 8px 2px 9px; }
.plain { gap: 3px; }
.plain .caret { width: 6px; }
.pin { margin: 0 13px 0 auto; }
.panel-tabs { height: 29px; border-bottom: 1px solid #dfe2e8; padding-left: 10px; }
.panel-tabs button { width: 92px; height: 29px; padding-left: 13px; gap: 7px; font-weight: 700; border: solid #dfe2e8; border-width: 1px 1px 0; background: #f6f8fa; }
.panel-tabs .caret { width: 9px; height: 5px; background: #5c5f66; }
.sub-tabs { display: flex; margin: 0 10px; height: 54px; border-bottom: 1px solid #dfe2e8; color: #75809a; }
.sub-tabs button { flex-direction: column; height: 54px; padding: 6px 4px 0; gap: 5px; }
.sub-tabs button + button { margin-left: 20px; }
.sub-tabs .on { color: #20a56f; font-weight: 700; border-bottom: 2px solid #20a56f; }
.props { padding: 11px 18px 0 12px; }
.row { display: flex; align-items: center; height: 37px; padding-left: 12px; }
.row.head { padding-left: 1px; }
.row.tall { height: 55px; }
.row:nth-child(8) { margin-top: 5px; }
.grow { flex: 1; }
.row.on { color: #20a56f; font-weight: 700; }
.tri-open { width: 8px; height: 8px; margin-right: 4px; background: #20a56f; clip-path: polygon(100% 0, 100% 100%, 0 100%); }
.tri-shut { width: 6px; height: 10px; margin-right: 6px; background: #242e44; clip-path: polygon(0 0, 100% 50%, 0 100%); }
.combo { width: 110px; height: 25px; padding: 0 4px 0 9px; justify-content: space-between; background: #fff; border: 1px solid #d4d8df; border-radius: 2px; }
.props .caret { width: 6px; }
.shadow-sample { width: 84px; height: 11px; margin-top: -7px; border-radius: 2px; background: #cddcf6; box-shadow: 3px 3px 2px #00000080; }
.combo.color { width: 109px; height: 21px; padding: 0 3px 0 2px; }
.ink { width: 93px; height: 15px; background: #000; }
.slide { display: flex; align-items: center; gap: 4px; }
.rnd { width: 15px; height: 15px; border: 1px solid #75809a; border-radius: 50%; justify-content: center; font-size: 15px; line-height: 13px; color: #75809a; }
.track { position: relative; width: 66px; height: 16px; }
.track output { position: absolute; top: -9px; transform: translateX(-50%); white-space: nowrap; color: #6b6b6b; pointer-events: none; }
.track input { appearance: none; display: block; width: 66px; height: 16px; }
.track input::-webkit-slider-runnable-track { height: 2px; background: linear-gradient(90deg, #20b97c var(--fill), #bbbdc3 var(--fill)); }
.track input::-webkit-slider-thumb { appearance: none; width: 9px; height: 7px; background: #20b97c; clip-path: polygon(50% 0, 100% 100%, 0 100%); }
.knob { width: 24px; height: 24px; margin-right: 10px; border: 1px solid #666; border-radius: 50%; background: radial-gradient(circle at 15px 8px, #aaa 0 1px, #888 2px 3px, transparent 3px), linear-gradient(#fff, #dcdcdc); box-shadow: 1px 1px 2px #00000055; }
.spin { display: flex; width: 90px; height: 23px; border: 1px solid #ccd0d7; border-radius: 2px; background: #fff; }
.spin button { width: 23px; justify-content: center; font-size: 16px; font-weight: 700; color: #808080; }
.spin input { flex: 1; min-width: 0; padding-right: 4px; text-align: center; border: solid #ccd0d7; border-width: 0 1px; }
.pick { position: relative; width: 110px; height: 25px; }
.pick select { appearance: none; width: 110px; height: 25px; padding-right: 14px; text-align: center; text-align-last: center; background: #fff; border: 1px solid #d4d8df; border-radius: 2px; }
.pick .caret { position: absolute; right: 5px; top: 11px; }

/* right rail */
.rail { width: 44px; border-left: 1px solid #dfe2e8; display: flex; flex-direction: column; align-items: center; gap: 4px; flex: none; padding-top: 11px; }
.grip { width: 20px; height: 4px; margin-bottom: 9px; border: solid #c9ccd3; border-width: 1px 0; }
.rail button { width: 32px; height: 32px; justify-content: center; border-radius: 2px; }
.rail button.on { background: #dadee5; }
.rail .dots { width: 38px; height: 43px; margin-top: auto; padding-top: 6px; border-top: 1px solid #dfe2e8; border-radius: 0; }

/* status bar */
.status { display: flex; align-items: center; height: 28px; flex: none; border-top: 1px solid #dfe2e8; padding: 0 11px 2px 16px; }
.status .vr { height: 14px; }
.macro + .vr { margin-left: 14px; }
.views { margin-left: auto; display: flex; align-items: center; }
.views button { height: 24px; justify-content: center; min-width: 24px; border-radius: 2px; }
.views .on { background: #dadee5; }
.views .read { gap: 3px; padding: 0 3px; }
.views .read .caret { width: 6px; }
.views .vr { margin: 0 10px 0 9px; }
.views button + button:not(.full):not(.minus):not(.read) { margin-left: 3px; }
.zoom-val { gap: 4px; }
.minus { margin-left: 4px; }
.zoom { appearance: none; width: 145px; height: 16px; margin: 0 0 0 4px; background: linear-gradient(#45506a, #45506a) 69px 50% / 1px 6px no-repeat; }
.zoom::-webkit-slider-runnable-track { height: 1px; background: #39435a; }
.zoom::-webkit-slider-thumb { appearance: none; width: 12px; height: 12px; margin-top: -6px; border: 1px solid #39435a; border-radius: 50%; background: #f1efee; }

/* overlays */
.meter { position: absolute; right: 0; top: 854px; width: 10px; height: 59px; padding: 6px 1px 6px 3px; background: #4b5060; border-radius: 4px 0 0 4px; border: 1px solid #33363f; border-right: 0; }
.meter i { display: block; height: 46px; background: repeating-linear-gradient(transparent 0 2px, #4b5060 2px 3px), linear-gradient(#2f323b 22%, #e7a85a 23%, #d6cf7b 50%, #78cf9a 80%, #55cfc6); }
.ime { position: absolute; right: 0; top: 926px; display: flex; align-items: center; gap: 10px; height: 27px; padding: 0 4px 0 26px; background: #fff; border: 1px solid #aebfe3; }
.ime-logo { position: absolute; left: -12px; top: -5px; }
.ime span { width: 16px; font: 700 15px/20px "Noto Sans CJK SC", sans-serif; color: #0a6fdc; }
.mark { position: absolute; right: 11px; bottom: 5px; display: flex; align-items: flex-end; opacity: .8; pointer-events: none; }
.mark svg { margin: 0 -1px 5px 0; }
.mark b { display: block; font: 700 21px/24px "Noto Sans CJK SC", sans-serif; color: #5294d6; }
.mark em { display: block; font: 700 16px/22px "Liberation Sans", sans-serif; color: #55bd83; }
```
